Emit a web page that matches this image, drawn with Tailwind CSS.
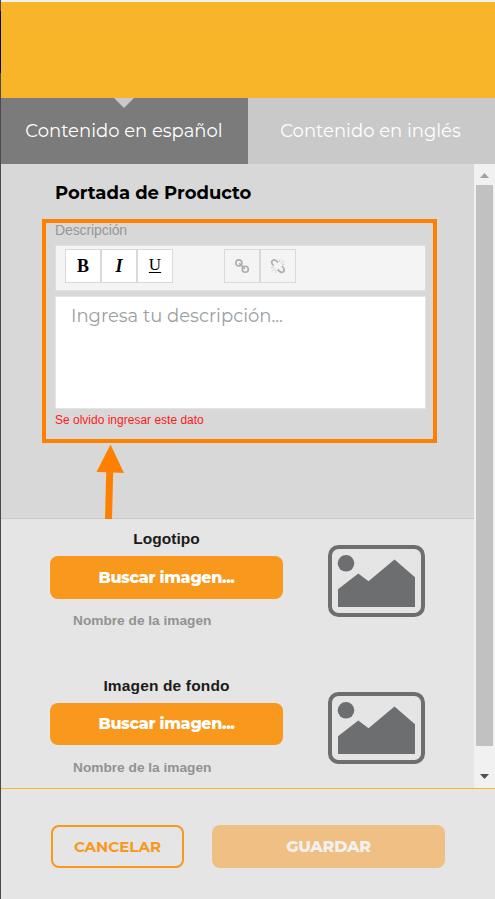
<!DOCTYPE html>
<html lang="es">
<head>
    <meta charset="UTF-8">
    <meta name="viewport" content="width=device-width, initial-scale=1.0">
    <title>Portada de Producto</title>
    <script src="https://cdn.jsdelivr.net/npm/@tailwindcss/browser@4"></script>
</head>
<body class="bg-[#4a4a4a] font-['Montserrat','Inter',sans-serif]">
    <div class="relative flex flex-col w-[494px] h-[899px] ml-px bg-[#e5e5e5]">
        <!-- Header -->
        <header class="h-[98px] shrink-0 border-t-2 border-[#f1f1f1] bg-[#f9b529]"></header>
        <div class="absolute -left-px top-[11px] w-px h-[62px] bg-[#0b0b3c]"></div>

        <!-- Language tabs -->
        <nav class="flex h-[66px] shrink-0 text-lg text-white">
            <button class="relative w-[247px] pr-px bg-[#7b7b7b] whitespace-nowrap">
                <svg class="absolute left-[113px] top-0" width="20" height="10" viewBox="0 0 20 10"><path d="M0 0H20L10 10Z" fill="#c9c9c9"/></svg>
                Contenido en español
            </button>
            <button class="w-[247px] pr-0.5 bg-[#c9c9c9] whitespace-nowrap">Contenido en inglés</button>
        </nav>

        <div class="flex h-[624px] shrink-0">
            <main class="w-[473px]">
                <!-- Description -->
                <section class="h-[355px] pl-[54px] pr-12 pt-[17px] bg-[#d8d8d8] border-b border-[#c8c8c8]">
                    <h1 class="h-6 leading-6 text-lg font-bold text-black whitespace-nowrap">Portada de Producto</h1>
                    <label class="block mt-4 h-[18px] leading-[18px] text-sm tracking-[-0.1px] text-[#979797] font-['Liberation_Sans',sans-serif]">Descripción</label>
                    <div class="flex mt-[6px] h-[46px] w-[371px] pl-[9px] pt-[3px] bg-[#f4f4f4] border border-[#dedede] text-black text-lg font-['Liberation_Serif',serif]">
                        <button class="w-9 h-[34px] bg-white border border-[#d9d9d9] font-bold">B</button>
                        <button class="w-9 h-[34px] bg-white border border-[#d9d9d9] font-bold italic">I</button>
                        <button class="w-9 h-[34px] pb-0.5 bg-white border border-[#d9d9d9] text-[17px] font-medium underline underline-offset-2">U</button>
                        <button class="flex items-center justify-center ml-[51px] w-9 h-[34px] border border-[#d9d9d9]">
                            <svg width="16" height="16" viewBox="0 0 16 16" fill="none" stroke="#adadad" stroke-width="1.6"><circle cx="4.9" cy="4.9" r="3"/><circle cx="11.3" cy="11.3" r="3"/><path d="M5.3 5.3L10.9 10.9"/></svg>
                        </button>
                        <button class="flex items-center justify-center w-9 h-[34px] border border-[#d9d9d9]">
                            <svg width="16" height="16" viewBox="0 0 16 16" fill="none" stroke="#b0b0b0" stroke-width="1.8"><path d="M3.6 7.6C1.2 5.6 1.2 3.2 2.8 2.2C4.8 1 6.4 2.4 8 4.4M7.6 11.4C9.8 14.2 12 15.2 13.5 13.7C15 12 14.2 10.3 12 8"/><path d="M9.8 1.2V4M14 2.6L11 5.6M12.2 6.3H14.8M1 9.6H4M1.8 13.6L5 10.4M5.8 11.8V15" stroke="#cfcfcf" stroke-width="1"/></svg>
                        </button>
                    </div>
                    <div class="mt-[5px] h-[113px] w-[371px] px-[15px] pt-[7px] bg-white border border-[#e4e4e4] text-lg leading-6 text-[#9a9fa4] whitespace-nowrap">Ingresa tu descripción...</div>
                    <p class="mt-[3px] h-4 leading-4 text-[12px] text-[#ff1a1a] font-['Liberation_Sans',sans-serif] whitespace-nowrap">Se olvido ingresar este dato</p>
                </section>

                <!-- Images -->
                <section class="flex h-[147px] pl-[49px] font-['Liberation_Sans',sans-serif]">
                    <div class="w-[233px]">
                        <h2 class="mt-[10px] h-5 leading-5 text-center text-[15.5px] tracking-[0.05px] font-bold text-[#1b1b1b]">Logotipo</h2>
                        <button class="block mt-[7px] w-full h-[43px] rounded-lg bg-[#f8981d] text-white text-base tracking-[-0.35px] font-extrabold font-['Montserrat','Inter',sans-serif]">Buscar imagen...</button>
                        <p class="ml-[23px] mt-3 leading-5 text-[13.7px] font-bold text-[#929292]">Nombre de la imagen</p>
                    </div>
                    <svg class="ml-[45px] mt-[26px]" width="97" height="72" viewBox="0 0 97 72" fill="#6d6e70"><rect x="2" y="2" width="93" height="68" rx="8.5" fill="none" stroke="#6d6e70" stroke-width="4"/><circle cx="18" cy="18.3" r="8.3"/><path d="M10 44.3L30.3 28.5L40.5 36.3L66.5 14.5L87 32.3V62H10Z"/></svg>
                </section>
                <section class="flex h-[122px] pl-[49px] font-['Liberation_Sans',sans-serif]">
                    <div class="w-[233px]">
                        <h2 class="mt-[10px] h-5 leading-5 text-center text-[15.5px] tracking-[0.15px] font-bold text-[#1b1b1b]">Imagen de fondo</h2>
                        <button class="block mt-[7px] w-full h-[42px] rounded-lg bg-[#f8981d] text-white text-base tracking-[-0.35px] font-extrabold font-['Montserrat','Inter',sans-serif]">Buscar imagen...</button>
                        <p class="ml-[23px] mt-[13px] leading-5 text-[13.7px] font-bold text-[#929292]">Nombre de la imagen</p>
                    </div>
                    <svg class="ml-[45px] mt-[26px]" width="97" height="72" viewBox="0 0 97 72" fill="#6d6e70"><rect x="2" y="2" width="93" height="68" rx="8.5" fill="none" stroke="#6d6e70" stroke-width="4"/><circle cx="18" cy="18.3" r="8.3"/><path d="M10 44.3L30.3 28.5L40.5 36.3L66.5 14.5L87 32.3V62H10Z"/></svg>
                </section>
            </main>

            <!-- Scrollbar -->
            <div class="flex flex-col w-[21px] bg-[#f1f1f1]">
                <svg class="ml-[6px] mt-[9px]" width="9" height="5" viewBox="0 0 9 5"><path d="M4.5 0L9 5H0Z" fill="#a3a3a3"/></svg>
                <div class="ml-[2px] mt-[7px] w-[17px] h-[561px] bg-[#c1c1c1]"></div>
                <svg class="ml-[6px] mt-7" width="9" height="5" viewBox="0 0 9 5"><path d="M0 0H9L4.5 5Z" fill="#505050"/></svg>
            </div>
        </div>

        <!-- Actions -->
        <footer class="flex gap-7 h-[111px] pl-[50px] pt-9 border-t border-[#f9b529] font-bold">
            <button class="w-[133px] h-[43px] pt-px rounded-lg border-2 border-[#f8981d] text-[#f8981d] text-[15px] tracking-[0.05px]">CANCELAR</button>
            <button class="w-[233px] h-[43px] rounded-lg bg-[#efbf83] text-[#f2f0ed] text-base font-extrabold tracking-[-0.3px]">GUARDAR</button>
        </footer>

        <!-- Highlight -->
        <div class="absolute left-[41px] top-[219px] w-[395px] h-[224px] border-4 border-[#ff8000]"></div>
        <svg class="absolute left-[95px] top-[444px]" width="29" height="75" viewBox="0 0 29 75" fill="#ff8000"><path d="M14.5 .5L28 29L17.2 28.6L16 75H9L10.2 28.3L.5 28Z"/></svg>
    </div>
</body>
</html>
